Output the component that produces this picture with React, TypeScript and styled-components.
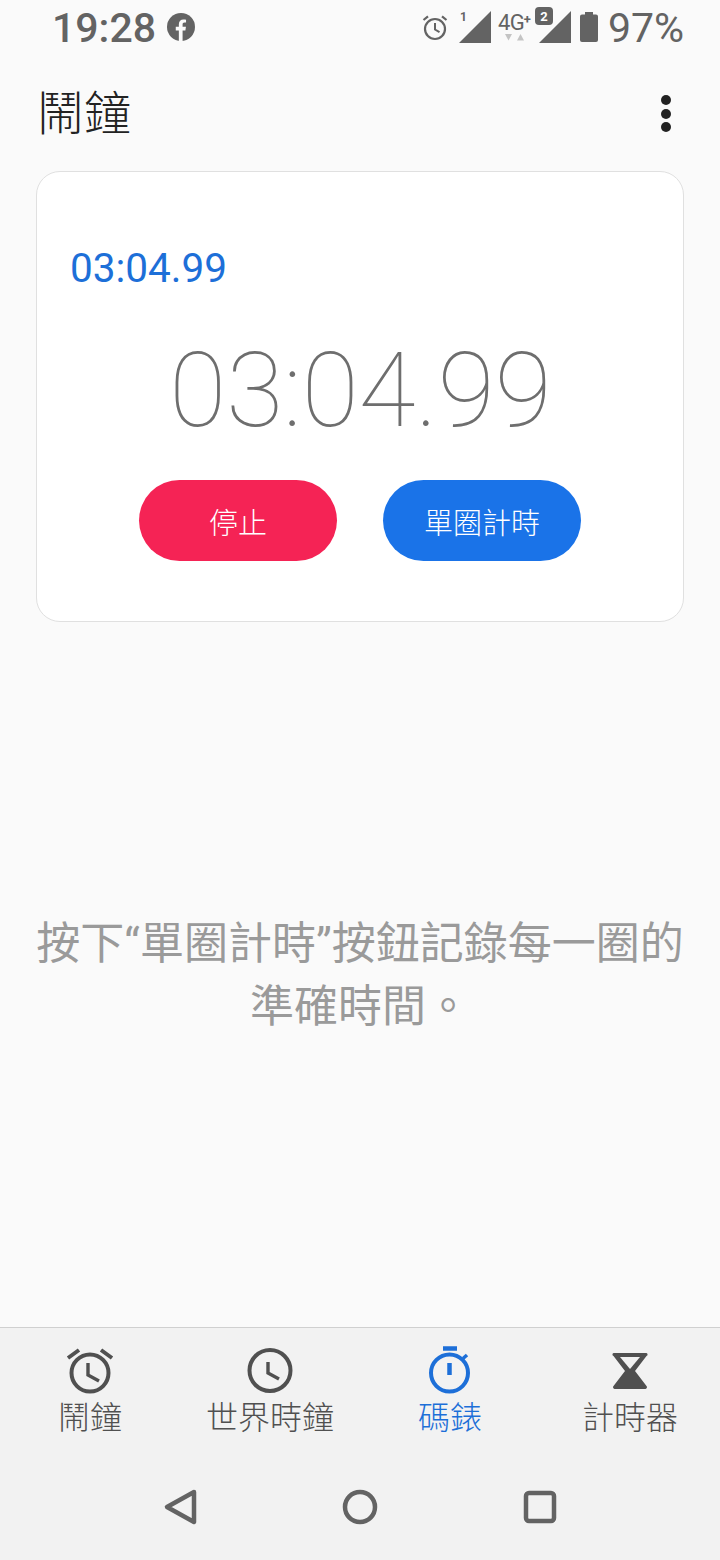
import React from 'react';
import styled, { createGlobalStyle } from 'styled-components';

const C = {
  bg: '#fafafa',
  nav: '#f2f2f2',
  icon: '#636363',
  navIcon: '#505050',
  blue: '#1a73e8',
  blueText: '#1d6fd8',
  red: '#f52355',
  hint: '#9a9a9a',
};

const CJK = `Roboto, 'Noto Sans CJK TC', sans-serif`;

const GlobalStyle = createGlobalStyle`
  * { box-sizing: border-box; }
  html, body { margin: 0; padding: 0; background: ${C.bg}; }
`;

const Page = styled.div`
  width: 720px;
  height: 1560px;
  display: flex;
  flex-direction: column;
  background: ${C.bg};
  font-family: ${CJK};
  overflow: hidden;
`;

// ─── Status bar ───────────────────────────────────────────────
const StatusBar = styled.div`
  height: 54px;
  flex-shrink: 0;
  display: flex;
  align-items: center;
  justify-content: space-between;
  padding: 0 36px 0 52px;
  color: ${C.icon};
`;

const StatusGroup = styled.div`
  display: flex;
  align-items: center;
`;

const Clock = styled.span`
  font-size: 41px;
  font-weight: 500;
  line-height: 1;
  margin: 3px 11px 0 0;
`;

const Battery = styled.span`
  font-size: 41px;
  font-weight: 400;
  line-height: 1;
  margin: 3px 0 0 10px;
`;

const SignalSlot = styled.div<{ $gap: number }>`
  position: relative;
  width: 32px;
  height: 32px;
  margin-left: ${p => p.$gap}px;
`;

const NetBlock = styled.div`
  position: relative;
  width: 33px;
  height: 32px;
  margin-left: 7px;
`;

const NetLabel = styled.span`
  position: absolute;
  left: 0;
  top: 1px;
  font-size: 22px;
  line-height: 22px;
  letter-spacing: -0.5px;
`;

const NetPlus = styled.span`
  position: absolute;
  right: 0;
  top: 2px;
  font-size: 13px;
  font-weight: 700;
  line-height: 1;
`;

const NetArrows = styled.span`
  position: absolute;
  left: 7px;
  top: 23px;
  display: flex;
`;

const SimOne = styled.span`
  position: absolute;
  left: 1px;
  top: 0;
  font-size: 12px;
  font-weight: 700;
  line-height: 1;
`;

const SimBadge = styled.span`
  position: absolute;
  left: -4px;
  top: -4px;
  width: 18px;
  height: 18px;
  border-radius: 4px;
  background: ${C.icon};
  color: #fff;
  font-size: 13px;
  font-weight: 700;
  display: flex;
  align-items: center;
  justify-content: center;
`;

const BatterySlot = styled.div`
  display: flex;
  margin-left: 9px;
`;

// ─── Header ───────────────────────────────────────────────────
const Header = styled.div`
  height: 117px;
  flex-shrink: 0;
  display: flex;
  align-items: flex-start;
  justify-content: space-between;
  padding: 29px 35px 0 37px;
`;

const Title = styled.h1`
  margin: 0;
  font-size: 47px;
  font-weight: 300;
  line-height: 62px;
  color: #222;
`;

const MoreButton = styled.div`
  width: 12px;
  margin: 12px 12px 0 0;
  display: flex;
  flex-direction: column;
  gap: 3.5px;
`;

const Dot = styled.span`
  width: 10px;
  height: 10px;
  border-radius: 50%;
  background: #222;
`;

// ─── Stopwatch card ───────────────────────────────────────────
const Card = styled.section`
  margin: 0 36px;
  height: 451px;
  flex-shrink: 0;
  background: #fff;
  border: 1px solid #e0e0e0;
  border-radius: 24px;
  padding: 70px 0 0 33px;
  display: flex;
  flex-direction: column;
`;

const LapTime = styled.div`
  font-size: 40.5px;
  line-height: 52px;
  color: ${C.blueText};
`;

const BigTime = styled.div`
  margin: 37px 32px 0 0;
  font-size: 104px;
  font-weight: 100;
  line-height: 120px;
  text-align: center;
  color: #6e6e6e;
`;

const Actions = styled.div`
  display: flex;
  justify-content: center;
  gap: 46px;
  margin: 29px 33px 0 0;
`;

const ActionButton = styled.div<{ $color: string }>`
  width: 198px;
  height: 81px;
  border-radius: 41px;
  background: ${p => p.$color};
  color: #fff;
  font-size: 29px;
  font-weight: 300;
  display: flex;
  align-items: center;
  justify-content: center;
`;

// ─── Empty hint ───────────────────────────────────────────────
const Hint = styled.div`
  flex: 1;
  display: flex;
  align-items: center;
  justify-content: center;
  padding: 2px 30px 0;
  text-align: center;
  font-size: 44px;
  line-height: 63px;
  color: ${C.hint};
`;

// ─── Bottom tabs ──────────────────────────────────────────────
const TabBar = styled.nav`
  flex-shrink: 0;
  height: 127px;
  background: ${C.nav};
  border-top: 1px solid #d0d0d0;
  display: grid;
  grid-template-columns: repeat(4, 1fr);
  padding-top: 18px;
`;

const Tab = styled.div<{ $active?: boolean }>`
  display: flex;
  flex-direction: column;
  align-items: center;
  color: ${p => (p.$active ? C.blueText : C.navIcon)};
`;

const TabLabel = styled.span`
  font-size: 32px;
  line-height: 42px;
  margin-top: 3px;
  font-weight: 300;
`;

const SystemNav = styled.div`
  flex-shrink: 0;
  height: 106px;
  background: ${C.nav};
  display: grid;
  grid-template-columns: 180px 180px 180px;
  justify-content: center;
  justify-items: center;
  align-items: center;
`;

// ─── Icons ────────────────────────────────────────────────────
const FacebookIcon = () => (
  <svg width="28" height="28" viewBox="0 0 30 30">
    <circle cx="15" cy="15" r="15" fill={C.icon} />
    <path d="M12.7 30V18.800H9.400v-4h3.300V12c0-3.300 2-5.100 4.900-5.100 1.400 0 2.800.2 2.800.2v3.200h-1.600c-1.600 0-2.100 1-2.100 2v2.500h3.600l-.6 4h-3V30z" fill={C.bg} />
  </svg>
);

const AlarmSmall = () => (
  <svg width="26" height="28" viewBox="0 0 26 28" fill="none" stroke={C.icon}>
    <circle cx="13" cy="16" r="10" strokeWidth="2.200" />
    <path d="M13 10v6.500l4.500 2.700" strokeWidth="2" />
    <path d="M1.500 7 6 3.300M24.500 7 20 3.300" strokeWidth="2.200" />
  </svg>
);

const Signal = () => (
  <svg width="32" height="32" viewBox="0 0 32 32">
    <path d="M0 32 32 0v32z" fill={C.icon} />
  </svg>
);

const Arrows = () => (
  <svg width="19" height="7" viewBox="0 0 19 7">
    <path d="M0 0h7L3.500 6.500zM12 6.500h7L15.500 0z" fill="#c4c4c4" />
  </svg>
);

const BatteryIcon = () => (
  <svg width="18" height="30" viewBox="0 0 18 30">
    <path d="M5 0h8v2.500h3a2 2 0 0 1 2 2V28a2 2 0 0 1-2 2H2a2 2 0 0 1-2-2V4.500a2 2 0 0 1 2-2h3z" fill={C.icon} />
  </svg>
);

const AlarmIcon = () => (
  <svg width="48" height="48" viewBox="0 0 48 48" fill="none" stroke="currentColor">
    <circle cx="24" cy="27" r="18.500" strokeWidth="4" />
    <path d="M22 17v12l11 6" strokeWidth="3.400" />
    <path d="M2 12 13 4M46 12 35 4" strokeWidth="4" />
  </svg>
);

const ClockIcon = () => (
  <svg width="48" height="48" viewBox="0 0 48 48" fill="none" stroke="currentColor">
    <circle cx="24" cy="24.500" r="20.500" strokeWidth="4" />
    <path d="M22 16v11l11 6" strokeWidth="3.400" />
  </svg>
);

const StopwatchIcon = () => (
  <svg width="48" height="48" viewBox="0 0 48 48" fill="none" stroke="currentColor">
    <circle cx="23.500" cy="27" r="18.500" strokeWidth="4" />
    <path d="M23.500 17v12" strokeWidth="4.500" />
    <path d="M17 2.500h14" strokeWidth="4.500" />
    <path d="M37 12.500l4-3.500" strokeWidth="3.500" />
  </svg>
);

const HourglassIcon = () => (
  <svg width="48" height="48" viewBox="0 0 48 48">
    <path d="M7.500 10a1.500 1.500 0 0 1 1-3h31a1.500 1.500 0 0 1 1 3L29 25l11.500 15a1.800 1.800 0 0 1-1 3h-31a1.800 1.800 0 0 1-1-3L19 25z" fill="currentColor" />
    <path d="M14 11h20L24 23z" fill={C.nav} />
  </svg>
);

const BackIcon = () => (
  <svg width="36" height="38" viewBox="0 0 36 38" fill="none">
    <path d="M32 4 5 19l27 15z" stroke={C.icon} strokeWidth="4.500" strokeLinejoin="round" />
  </svg>
);

const HomeIcon = () => (
  <svg width="38" height="38" viewBox="0 0 38 38" fill="none">
    <circle cx="19" cy="19" r="15" stroke={C.icon} strokeWidth="4.500" />
  </svg>
);

const RecentsIcon = () => (
  <svg width="36" height="38" viewBox="0 0 36 38" fill="none">
    <rect x="4" y="5" width="28" height="28" rx="3" stroke={C.icon} strokeWidth="4.500" />
  </svg>
);

const TABS = [
  { label: '鬧鐘', icon: <AlarmIcon /> },
  { label: '世界時鐘', icon: <ClockIcon /> },
  { label: '碼錶', icon: <StopwatchIcon />, active: true },
  { label: '計時器', icon: <HourglassIcon /> },
];

export default function App() {
  return (
    <Page>
      <GlobalStyle />
      <StatusBar>
        <StatusGroup>
          <Clock>19:28</Clock>
          <FacebookIcon />
        </StatusGroup>
        <StatusGroup>
          <AlarmSmall />
          <SignalSlot $gap={11}>
            <Signal />
            <SimOne>1</SimOne>
          </SignalSlot>
          <NetBlock>
            <NetLabel>4G</NetLabel>
            <NetPlus>+</NetPlus>
            <NetArrows><Arrows /></NetArrows>
          </NetBlock>
          <SignalSlot $gap={8}>
            <Signal />
            <SimBadge>2</SimBadge>
          </SignalSlot>
          <BatterySlot><BatteryIcon /></BatterySlot>
          <Battery>97%</Battery>
        </StatusGroup>
      </StatusBar>

      <Header>
        <Title>鬧鐘</Title>
        <MoreButton>
          <Dot />
          <Dot />
          <Dot />
        </MoreButton>
      </Header>

      <Card>
        <LapTime>03:04.99</LapTime>
        <BigTime>03:04.99</BigTime>
        <Actions>
          <ActionButton $color={C.red}>停止</ActionButton>
          <ActionButton $color={C.blue}>單圈計時</ActionButton>
        </Actions>
      </Card>

      <Hint>按下“單圈計時”按鈕記錄每一圈的<br />準確時間。</Hint>

      <TabBar>
        {TABS.map(t => (
          <Tab key={t.label} $active={t.active}>
            {t.icon}
            <TabLabel>{t.label}</TabLabel>
          </Tab>
        ))}
      </TabBar>

      <SystemNav>
        <BackIcon />
        <HomeIcon />
        <RecentsIcon />
      </SystemNav>
    </Page>
  );
}
